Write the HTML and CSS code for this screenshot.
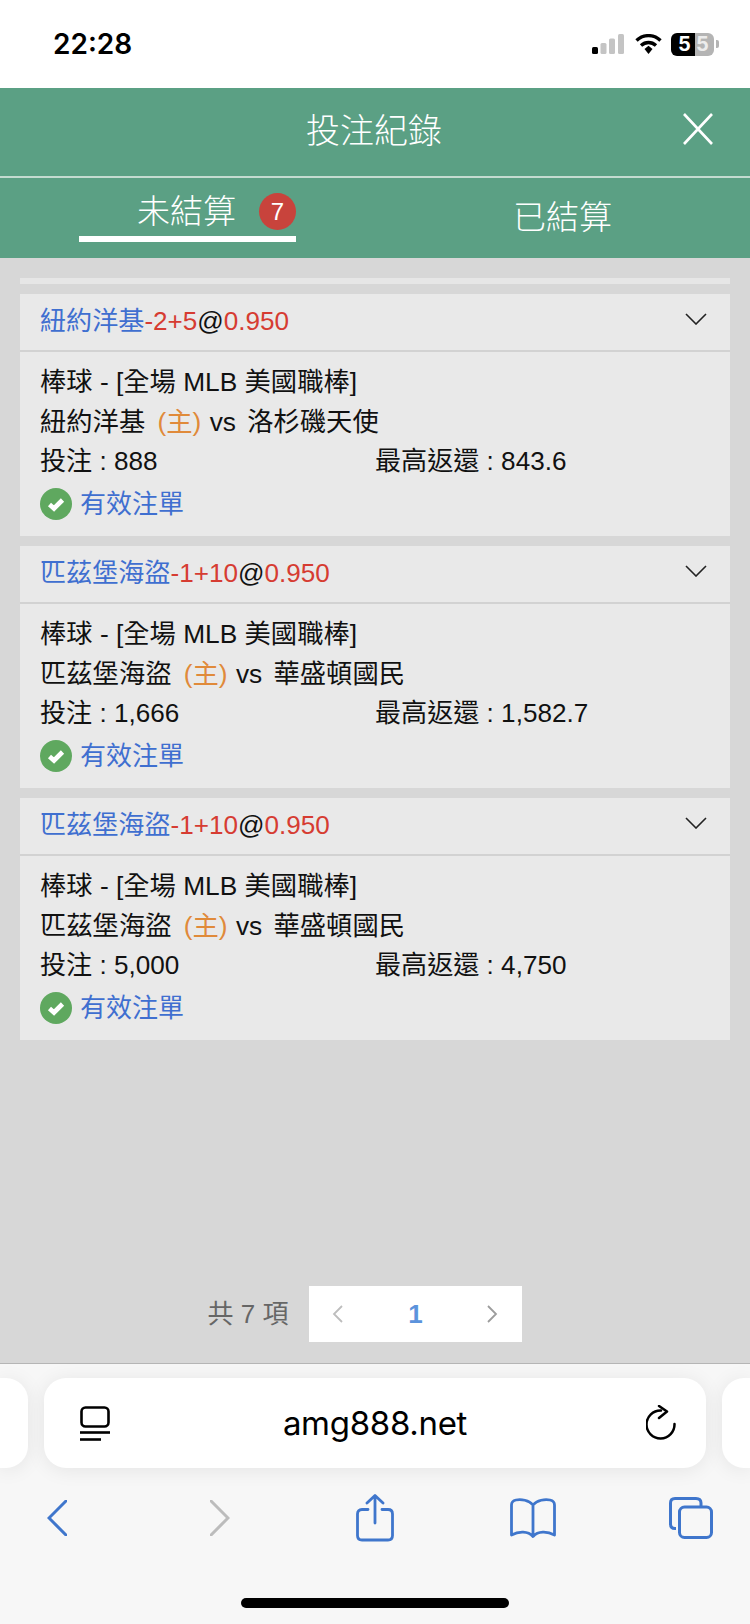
FILE: index.html
```html
<!DOCTYPE html>
<html>
<head>
  <meta charset="utf-8">
  <title>投注紀錄</title>
  <link rel="stylesheet" href="styles.css">
</head>
<body>
  <div class="status-bar">
    <span class="status-time">22:28</span>
    <div class="status-icons">
      <svg class="icon-signal" width="32" height="20" viewBox="0 0 32 20">
        <rect x="0" y="13" width="6" height="7" rx="1.5" fill="#000"/>
        <rect x="8.500" y="9" width="6" height="11" rx="1.5" fill="#c4c4c4"/>
        <rect x="17" y="4.500" width="6" height="15.500" rx="1.5" fill="#c4c4c4"/>
        <rect x="26" y="0" width="6" height="20" rx="1.5" fill="#c4c4c4"/>
      </svg>
      <svg class="icon-wifi" width="27" height="20" viewBox="0 0 27 20">
        <path d="M1.500 6.500C8.500 0 18.500 0 25.500 6.500" fill="none" stroke="#000" stroke-width="3.400"/>
        <path d="M6 11.500C10.500 7.500 16.500 7.500 21 11.500" fill="none" stroke="#000" stroke-width="3.400"/>
        <path d="M9.500 15L13.500 11.800L17.500 15L13.500 20Z" fill="#000"/>
      </svg>
      <div class="battery">
        <span class="battery-level">5</span><span class="battery-rest">5</span>
      </div>
      <div class="battery-nib"></div>
    </div>
  </div>

  <div class="top-header">
    <div class="title-row">
      <span class="title-text">投注紀錄</span>
      <svg class="close-icon" width="32" height="32" viewBox="0 0 32 32">
        <path d="M2 1L30 31M30 1L2 31" fill="none" stroke="#fff" stroke-width="2.600"/>
      </svg>
    </div>
    <div class="tabs">
      <div class="tab">
        <div class="tab-active">
          <span>未結算</span>
          <span class="badge">7</span>
        </div>
      </div>
      <div class="tab tab-other">已結算</div>
    </div>
  </div>

  <div class="main">
    <div class="list">
      <div class="top-strip"></div>

      <div class="bet-card">
        <div class="bet-head">
          <div><span class="c-blue">紐約洋基</span><span class="c-red">-2+5</span>@<span class="c-red">0.950</span></div>
          <svg class="chevron" width="22" height="12" viewBox="0 0 22 12">
            <path d="M1 1L11 11L21 1" fill="none" stroke="#222" stroke-width="1.600"/>
          </svg>
        </div>
        <div class="bet-body">
          <div class="bet-row">棒球 - [全場 MLB 美國職棒]</div>
          <div class="bet-row">紐約洋基 <span class="c-orange">(主)</span> <span class="vs">vs</span> 洛杉磯天使</div>
          <div class="bet-row bet-cols">
            <span>投注 : 888</span>
            <span>最高返還 : 843.6</span>
          </div>
          <div class="bet-status">
            <svg width="32" height="32" viewBox="0 0 32 32">
              <circle cx="16" cy="16" r="16" fill="#5fa85f"/>
              <path d="M9.500 16.500L14 20.500L22.500 12" fill="none" stroke="#fff" stroke-width="4.600"/>
            </svg>
            <span class="c-blue status-text">有效注單</span>
          </div>
        </div>
      </div>

      <div class="bet-card">
        <div class="bet-head">
          <div><span class="c-blue">匹茲堡海盜</span><span class="c-red">-1+10</span>@<span class="c-red">0.950</span></div>
          <svg class="chevron" width="22" height="12" viewBox="0 0 22 12">
            <path d="M1 1L11 11L21 1" fill="none" stroke="#222" stroke-width="1.600"/>
          </svg>
        </div>
        <div class="bet-body">
          <div class="bet-row">棒球 - [全場 MLB 美國職棒]</div>
          <div class="bet-row">匹茲堡海盜 <span class="c-orange">(主)</span> <span class="vs">vs</span> 華盛頓國民</div>
          <div class="bet-row bet-cols">
            <span>投注 : 1,666</span>
            <span>最高返還 : 1,582.7</span>
          </div>
          <div class="bet-status">
            <svg width="32" height="32" viewBox="0 0 32 32">
              <circle cx="16" cy="16" r="16" fill="#5fa85f"/>
              <path d="M9.500 16.500L14 20.500L22.500 12" fill="none" stroke="#fff" stroke-width="4.600"/>
            </svg>
            <span class="c-blue status-text">有效注單</span>
          </div>
        </div>
      </div>

      <div class="bet-card">
        <div class="bet-head">
          <div><span class="c-blue">匹茲堡海盜</span><span class="c-red">-1+10</span>@<span class="c-red">0.950</span></div>
          <svg class="chevron" width="22" height="12" viewBox="0 0 22 12">
            <path d="M1 1L11 11L21 1" fill="none" stroke="#222" stroke-width="1.600"/>
          </svg>
        </div>
        <div class="bet-body">
          <div class="bet-row">棒球 - [全場 MLB 美國職棒]</div>
          <div class="bet-row">匹茲堡海盜 <span class="c-orange">(主)</span> <span class="vs">vs</span> 華盛頓國民</div>
          <div class="bet-row bet-cols">
            <span>投注 : 5,000</span>
            <span>最高返還 : 4,750</span>
          </div>
          <div class="bet-status">
            <svg width="32" height="32" viewBox="0 0 32 32">
              <circle cx="16" cy="16" r="16" fill="#5fa85f"/>
              <path d="M9.500 16.500L14 20.500L22.500 12" fill="none" stroke="#fff" stroke-width="4.600"/>
            </svg>
            <span class="c-blue status-text">有效注單</span>
          </div>
        </div>
      </div>
    </div>

    <div class="pagination">
      <span class="page-total">共 7 項</span>
      <div class="page-box">
        <svg width="11" height="18" viewBox="0 0 11 18">
          <path d="M10 1L2 9L10 17" fill="none" stroke="#bdbdbd" stroke-width="1.800"/>
        </svg>
        <span class="page-num">1</span>
        <svg width="11" height="18" viewBox="0 0 11 18">
          <path d="M1 1L9 9L1 17" fill="none" stroke="#9c9c9c" stroke-width="1.800"/>
        </svg>
      </div>
    </div>
  </div>

  <div class="toolbar">
    <div class="url-row">
      <div class="side-pill side-left"></div>
      <div class="url-bar">
        <svg class="reader-icon" width="30" height="35" viewBox="0 0 30 35">
          <rect x="1.500" y="1.500" width="27" height="19" rx="4" fill="none" stroke="#000" stroke-width="2.600"/>
          <path d="M0 26.500H30" stroke="#000" stroke-width="2.600"/>
          <path d="M0 33.500H21" stroke="#000" stroke-width="2.600"/>
        </svg>
        <span class="url-text">amg888.net</span>
        <svg width="30" height="36" viewBox="0 0 30 36">
          <path d="M15 5.500A14 14 0 1 0 28.500 19" fill="none" stroke="#000" stroke-width="2.500" stroke-linecap="round"/>
          <path d="M13 1L21 6.500L13 13" fill="none" stroke="#000" stroke-width="2.500" stroke-linecap="round" stroke-linejoin="round"/>
        </svg>
      </div>
      <div class="side-pill side-right"></div>
    </div>

    <div class="nav-row">
      <svg class="nav-back" width="20" height="36" viewBox="0 0 20 36">
        <path d="M19 1L2 18L19 35" fill="none" stroke="#3f76cc" stroke-width="3" stroke-linecap="round"/>
      </svg>
      <svg class="nav-forward" width="20" height="36" viewBox="0 0 20 36">
        <path d="M1 1L18 18L1 35" fill="none" stroke="#bcbcbc" stroke-width="3" stroke-linecap="round"/>
      </svg>
      <svg class="nav-share" width="38" height="48" viewBox="0 0 38 48">
        <path d="M12 15.500H6Q1.500 15.500 1.500 20V41.500Q1.500 46 6 46H32Q36.500 46 36.500 41.500V20Q36.500 15.500 32 15.500H26" fill="none" stroke="#3f76cc" stroke-width="2.800" stroke-linecap="round"/>
        <path d="M19 29V2M11 9L19 1.500L27 9" fill="none" stroke="#3f76cc" stroke-width="2.800" stroke-linecap="round" stroke-linejoin="round"/>
      </svg>
      <svg class="nav-book" width="46" height="40" viewBox="0 0 46 40">
        <path d="M23 7C19 2 11 1 6 2Q1.500 3 1.500 7V37C9 33 18 33 23 38.500C28 33 37 33 44.500 37V7Q44.500 3 40 2C35 1 27 2 23 7V38.500" fill="none" stroke="#3f76cc" stroke-width="2.800" stroke-linejoin="round"/>
      </svg>
      <svg class="nav-tabs" width="44" height="42" viewBox="0 0 44 42">
        <path d="M7 31.500H6Q1.500 31.500 1.500 27V6Q1.500 1.500 6 1.500H27Q32 1.500 32 6V9" fill="none" stroke="#3f76cc" stroke-width="3"/>
        <rect x="10.500" y="10" width="32" height="30.500" rx="5" fill="none" stroke="#3f76cc" stroke-width="3"/>
      </svg>
    </div>

    <div class="home-bar"></div>
  </div>
</body>
</html>
```

FILE: styles.css
```css
* {
  box-sizing: border-box;
}

html,
body {
  margin: 0;
  padding: 0;
}

body {
  width: 750px;
  height: 1624px;
  display: flex;
  flex-direction: column;
  overflow: hidden;
  font-family: "Liberation Sans", "Noto Sans CJK TC", sans-serif;
  font-size: 26px;
  color: #111;
  background-color: #d7d7d7;
}

.status-bar {
  height: 88px;
  padding: 0 31px 0 53px;
  display: flex;
  align-items: center;
  justify-content: space-between;
  background-color: #fff;
}

.status-time {
  font-family: Inter, sans-serif;
  font-size: 28px;
  font-weight: 600;
  color: #000;
}

.status-icons {
  display: flex;
  align-items: center;
}

.icon-wifi {
  margin-left: 11px;
}

.battery {
  width: 43px;
  height: 23px;
  margin-left: 9px;
  display: flex;
  border-radius: 6px;
  overflow: hidden;
  font-family: Inter, sans-serif;
  font-size: 20px;
  font-weight: 700;
  line-height: 23px;
  text-align: center;
  color: #fff;
}

.battery-level {
  width: 24px;
  padding-left: 3px;
  background-color: #000;
}

.battery-rest {
  width: 19px;
  padding-right: 4px;
  color: #ececec;
  background-color: #b4b4b4;
}

.battery-nib {
  width: 3px;
  height: 8px;
  margin-left: 2px;
  border-radius: 0 2px 2px 0;
  background-color: #b4b4b4;
}

.top-header {
  background-color: #5ba084;
  color: #fff;
}

.title-row {
  height: 90px;
  padding: 0 36px 8px;
  display: grid;
  grid-template-columns: 1fr auto 1fr;
  align-items: center;
  border-bottom: 2px solid #c4dbd0;
}

.title-text {
  grid-column: 2;
  margin-right: 2px;
  font-size: 34px;
  font-weight: 300;
}

.close-icon {
  justify-self: end;
  margin-top: 2px;
}

.tabs {
  height: 80px;
  display: flex;
  font-size: 33px;
  font-weight: 300;
}

.tab {
  width: 50%;
  display: flex;
  justify-content: center;
}

.tab-other {
  line-height: 80px;
}

.tab-active {
  width: 217px;
  height: 49px;
  margin-top: 15px;
  display: flex;
  align-items: flex-start;
  justify-content: flex-end;
  gap: 23px;
  line-height: 37px;
  border-bottom: 6px solid #fff;
}

.badge {
  width: 37px;
  height: 37px;
  border-radius: 50%;
  font-size: 24px;
  font-weight: 400;
  text-align: center;
  background-color: #c8433c;
}

.main {
  flex: 1;
  padding: 20px 20px 21px;
  display: flex;
  flex-direction: column;
  justify-content: space-between;
}

.top-strip {
  height: 6px;
  margin-bottom: 10px;
  background-color: #e6e6e6;
}

.bet-card {
  margin-bottom: 10px;
  background-color: #e9e9e9;
}

.bet-head {
  height: 58px;
  padding: 0 23px 6px 20px;
  display: flex;
  align-items: center;
  justify-content: space-between;
  border-bottom: 2px solid #d2d2d2;
  font-size: 26.1px;
}

.chevron {
  margin-bottom: 1px;
}

.bet-body {
  padding: 10px 20px 12px;
}

.bet-row {
  height: 40px;
  font-size: 26.3px;
  line-height: 40px;
}

.bet-cols {
  display: flex;
  font-size: 26.1px;
  line-height: 38px;
}

.bet-cols span {
  width: 50%;
}

.bet-status {
  height: 40px;
  margin-top: 2px;
  display: flex;
  align-items: center;
  gap: 8px;
}

.status-text {
  padding-bottom: 6px;
}

.vs {
  margin: 0 4px 0 1px;
}

.c-blue {
  color: #3f6fd0;
}

.c-red {
  color: #d63c32;
}

.c-orange {
  margin-left: 5px;
  color: #e08a3a;
}

.pagination {
  display: flex;
  align-items: center;
  justify-content: center;
  gap: 21px;
  padding-right: 20px;
}

.page-total {
  margin-bottom: 6px;
  font-size: 26px;
  color: #666;
}

.page-box {
  width: 213px;
  height: 56px;
  padding: 0 24px 0 23px;
  display: flex;
  align-items: center;
  justify-content: space-between;
  background-color: #fff;
}

.page-num {
  font-size: 26px;
  font-weight: 700;
  color: #5b93dc;
}

.toolbar {
  height: 261px;
  padding-top: 14px;
  border-top: 1px solid #b5b5b5;
  background-color: #f7f7f7;
}

.url-row {
  height: 90px;
  display: flex;
  gap: 16px;
}

.side-pill {
  width: 28px;
  flex-shrink: 0;
  background-color: #fff;
  box-shadow: 0 2px 20px rgba(0, 0, 0, 0.08);
}

.side-left {
  border-radius: 0 22px 22px 0;
}

.side-right {
  border-radius: 22px 0 0 22px;
}

.url-bar {
  flex: 1;
  padding: 0 30px 0 36px;
  display: flex;
  align-items: center;
  justify-content: space-between;
  border-radius: 22px;
  background-color: #fff;
  box-shadow: 0 2px 20px rgba(0, 0, 0, 0.08);
}

.reader-icon {
  margin-right: -6px;
}

.url-text {
  font-family: Inter, sans-serif;
  font-size: 33px;
  letter-spacing: -0.3px;
  color: #000;
}

.nav-row {
  height: 48px;
  margin-top: 26px;
  display: flex;
  align-items: center;
}

.nav-back {
  margin-left: 47px;
}

.nav-forward {
  margin-left: 143px;
}

.nav-share {
  margin-left: 126px;
}

.nav-book {
  margin-left: 116px;
}

.nav-tabs {
  margin-left: 113px;
}

.home-bar {
  width: 268px;
  height: 10px;
  margin: 56px auto 0;
  border-radius: 5px;
  background-color: #000;
}
```
